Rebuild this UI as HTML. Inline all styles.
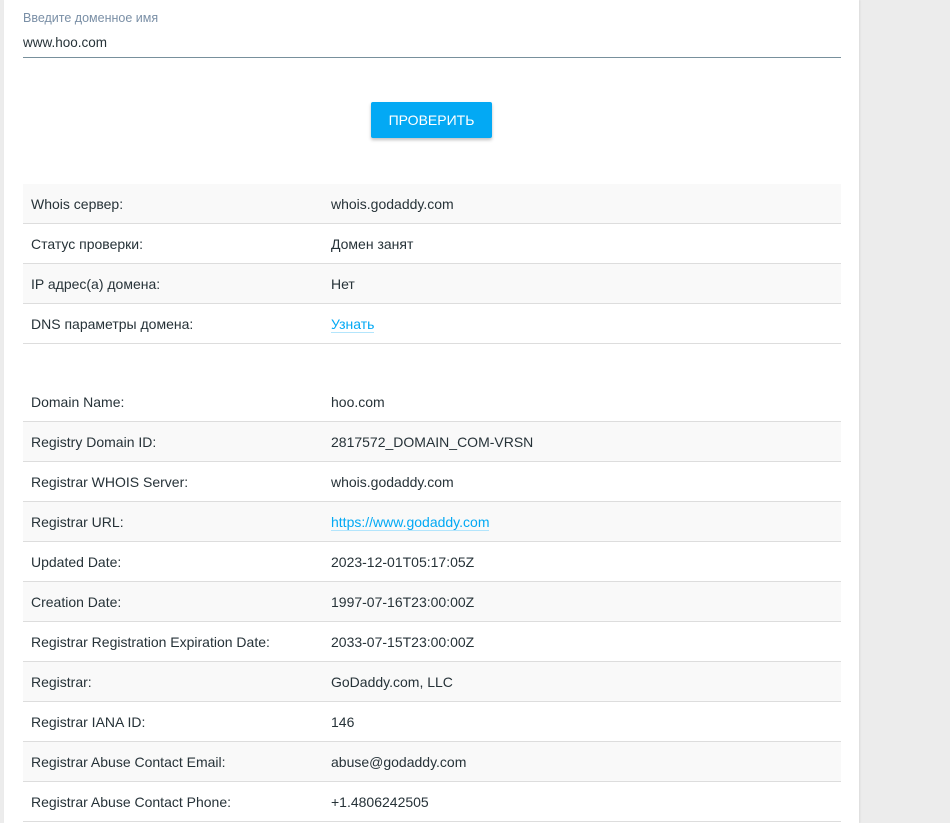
<!DOCTYPE html>
<html><head><meta charset="utf-8"><style>
body{margin:0;background:#ececec;font-family:"Liberation Sans",sans-serif;color:#263238;}
.panel{position:absolute;left:4px;top:0;width:855px;height:823px;background:#fff;box-shadow:1px 0 2px rgba(0,0,0,.08);}
.lbl{position:absolute;left:23px;top:11px;font-size:12.5px;color:#7a8fa6;}
.inp{position:absolute;left:23px;top:35px;font-size:13.5px;color:#263238;}
.line{position:absolute;left:23px;top:57px;width:818px;height:1px;background:#78909c;}
.btn{position:absolute;left:371px;top:102px;width:121px;height:36px;background:#03a9f4;color:#fff;font-size:14px;line-height:37px;text-align:center;border-radius:2px;box-shadow:0 2px 3px rgba(0,0,0,.25);}
table{position:absolute;left:23px;width:818px;border-collapse:collapse;font-size:14px;}
td{height:39px;border-bottom:1px solid #ddd;padding:0 0 0 8px;vertical-align:middle;}
td:first-child{width:292px;}
.t1 tr:nth-child(odd){background:#f9f9f9}
.t2 tr:nth-child(even){background:#f9f9f9}
a{color:#03a9f4;text-decoration:none;border-bottom:1px solid #b3e5fc;}
</style></head><body>
<div class="panel">
</div>
<div class="lbl">Введите доменное имя</div>
<div class="inp">www.hoo.com</div>
<div class="line"></div>
<div class="btn">ПРОВЕРИТЬ</div>
<table class="t1" style="top:184px">
<tr><td>Whois сервер:</td><td>whois.godaddy.com</td></tr>
<tr><td>Статус проверки:</td><td>Домен занят</td></tr>
<tr><td>IP адрес(а) домена:</td><td>Нет</td></tr>
<tr><td>DNS параметры домена:</td><td><a>Узнать</a></td></tr>
</table>
<table class="t2" style="top:382px">
<tr><td>Domain Name:</td><td>hoo.com</td></tr>
<tr><td>Registry Domain ID:</td><td>2817572_DOMAIN_COM-VRSN</td></tr>
<tr><td>Registrar WHOIS Server:</td><td>whois.godaddy.com</td></tr>
<tr><td>Registrar URL:</td><td><a>https://www.godaddy.com</a></td></tr>
<tr><td>Updated Date:</td><td>2023-12-01T05:17:05Z</td></tr>
<tr><td>Creation Date:</td><td>1997-07-16T23:00:00Z</td></tr>
<tr><td>Registrar Registration Expiration Date:</td><td>2033-07-15T23:00:00Z</td></tr>
<tr><td>Registrar:</td><td>GoDaddy.com, LLC</td></tr>
<tr><td>Registrar IANA ID:</td><td>146</td></tr>
<tr><td>Registrar Abuse Contact Email:</td><td>abuse@godaddy.com</td></tr>
<tr><td>Registrar Abuse Contact Phone:</td><td>+1.4806242505</td></tr>
</table>
</body></html>
